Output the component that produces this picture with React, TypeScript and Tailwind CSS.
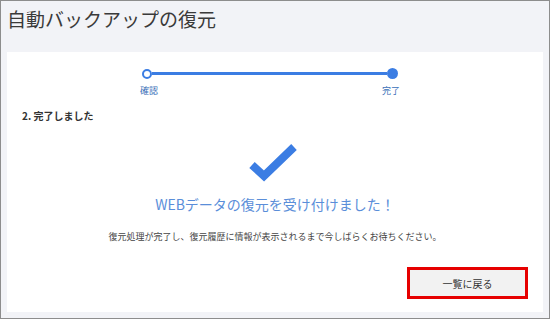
const font = { fontFamily: '"Noto Sans CJK JP", "Noto Sans", sans-serif' };

function Stepper() {
	return (
		<div className="ml-[135px] w-[256px]">
			<div className="flex items-center">
				<div className="h-[10px] w-[10px] rounded-full border-2 border-[#3b7de3] bg-white" />
				<div className="h-[3px] flex-1 bg-[#3b7de3]" />
				<div className="h-[11px] w-[11px] rounded-full bg-[#3b7de3]" />
			</div>
			<div className="mt-[6px] flex justify-between text-[9px] leading-[12px] text-[#3a6fb8]">
				<span className="-ml-[2px]">確認</span>
				<span className="-mr-[2px]">完了</span>
			</div>
		</div>
	);
}

export default function App() {
	return (
		<div
			className="flex h-[319px] w-[550px] flex-col border border-[#8d8d8d] bg-[#f2f3f7] px-[6px] pb-[6px]"
			style={font}
		>
			<h1 className="h-[51px] pt-[5px] text-[19px] leading-[26px] text-[#3a3a3a]">
				自動バックアップの復元
			</h1>
			<div className="flex flex-1 flex-col bg-white pt-[16px]">
				<Stepper />

				<h2 className="mt-[12px] ml-[15px] text-[10px] font-bold leading-[14px] text-[#333]">
					2. 完了しました
				</h2>

				<div className="mt-[19px] flex justify-center">
					<svg width="50" height="40" viewBox="0 0 50 40" className="ml-[-4px]">
						<path
							d="M4 23 L16 34 L46 5"
							fill="none"
							stroke="#3b7de3"
							strokeWidth="8"
							strokeLinejoin="miter"
						/>
					</svg>
				</div>

				<p className="mt-[12px] text-center text-[14px] leading-[20px] text-[#5a8ed9]">
					WEBデータの復元を受け付けました！
				</p>

				<p className="mt-[17px] text-center text-[9px] leading-[12px] text-[#444]">
					復元処理が完了し、復元履歴に情報が表示されるまで今しばらくお待ちください。
				</p>

				<div className="mt-[24px] flex justify-end pr-[15px]">
					<button className="h-[32px] w-[121px] border-[3px] border-[#e60000] bg-[#f2f2f2] text-[10px] text-[#333]">
						一覧に戻る
					</button>
				</div>
			</div>
		</div>
	);
}
